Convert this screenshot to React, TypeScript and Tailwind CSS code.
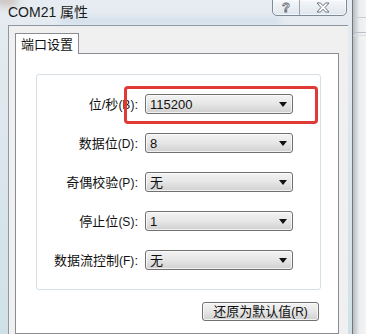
import { FC } from "react";

const font = "font-['Liberation_Sans','Noto_Sans_CJK_SC',sans-serif]";

type ComboProps = { value: string };

const Combo: FC<ComboProps> = ({ value }) => (
  <div className="flex h-[20px] w-[148px] items-center rounded-[3px] border border-[#707070] bg-gradient-to-b from-[#f3f3f3] via-[#e6e6e6] to-[#d0d0d0] pl-[4px] pr-[5px] shadow-[inset_0_0_0_1px_rgba(255,255,255,0.7)]">
    <span className="flex-1 text-[13px] leading-none text-[#111]">{value}</span>
    <svg width="8" height="5" viewBox="0 0 8 5" className="mb-[-1px]">
      <path d="M0 0h8L4 5z" fill="#111" />
    </svg>
  </div>
);

const rows = [
  { label: "位/秒", key: "(B)", value: "115200" },
  { label: "数据位", key: "(D)", value: "8" },
  { label: "奇偶校验", key: "(P)", value: "无" },
  { label: "停止位", key: "(S)", value: "1" },
  { label: "数据流控制", key: "(F)", value: "无" },
];

const App: FC = () => {
  return (
    <div className={`flex h-[334px] w-[366px] overflow-hidden bg-[#e4e9ee] ${font}`}>
      {/* dialog window */}
      <div className="flex w-[353px] flex-col bg-gradient-to-b from-[#e6ecf1] via-[#dbe5ec] to-[#cfe1e7] border-r border-[#6f7880]">
        {/* title bar */}
        <div className="relative flex h-[25px] shrink-0 items-start">
          <div className="absolute left-[-6px] top-[-6px] h-[12px] w-[24px] rounded-full bg-[#b39a8a] opacity-50 blur-[4px]" />
          <div className="absolute left-[60px] top-[19px] h-[4px] w-[220px] bg-[#aac4e2] opacity-50 blur-[3px]" />
          <span className="relative ml-[8px] mt-[4px] text-[14px] leading-[16px] text-[#1b1b1b]">COM21 属性</span>
          <div className="relative ml-auto mr-[5px] mt-[-1px] flex h-[17px] overflow-hidden rounded-b-[5px] border border-[#7d8996] bg-gradient-to-b from-[#f4f7fa] to-[#dfe6ee] shadow-[inset_0_0_0_1px_rgba(255,255,255,0.6)]">
            <div className="flex w-[27px] items-center justify-center border-r border-[#9aa5b1]">
              <span className="text-[13px] font-bold leading-none text-white [-webkit-text-stroke:0.8px_#5b636b]">?</span>
            </div>
            <div className="flex w-[46px] items-center justify-center">
              <svg width="14" height="11" viewBox="0 0 14 11">
                <path
                  d="M1 1h3.5L7 3.8 9.5 1H13L9 5.5 13 10H9.5L7 7.2 4.5 10H1l4-4.5z"
                  fill="#fff"
                  stroke="#5f6770"
                  strokeWidth="0.9"
                  strokeLinejoin="round"
                />
              </svg>
            </div>
          </div>
        </div>

        {/* body */}
        <div className="flex flex-1 pl-[8px] pr-[5px]">
          <div className="flex flex-1 flex-col border-l border-t border-[#8e979f] bg-[#f0f0f0] pl-[6px] pr-[9px] pt-[7px]">
            {/* tab strip */}
            <div className="flex">
              <div className="relative z-10 mb-[-1px] flex h-[21px] w-[64px] items-center justify-center border border-b-0 border-[#898c95] bg-white text-[13px] leading-none text-[#111]">
                端口设置
              </div>
            </div>
            {/* tab page */}
            <div className="flex flex-1 flex-col border border-[#898c95] bg-white pl-[20px] pr-[17px] pt-[20px]">
              <div className="relative flex h-[216px] w-[285px] flex-col gap-[19px] rounded-[3px] border border-[#d5dfe5] pt-[19px]">
                {rows.map((r) => (
                  <div key={r.label} className="flex items-center">
                    <div className="w-[101px] text-right text-[13px] leading-none text-[#111]">
                      {r.label}
                      <span className="text-[12px]">{r.key}</span>:
                    </div>
                    <div className="ml-[7px]">
                      <Combo value={r.value} />
                    </div>
                  </div>
                ))}
                <div className="absolute left-[87px] top-[11px] h-[38px] w-[194px] rounded-[4px] border-[3px] border-[#e03a36]" />
              </div>
              <div className="mr-[2px] mt-[12px] flex justify-end">
                <div className="flex h-[19px] w-[117px] items-center justify-center rounded-[3px] border border-[#707070] bg-gradient-to-b from-[#f3f3f3] via-[#e6e6e6] to-[#d0d0d0] text-[13px] leading-none text-[#111] shadow-[inset_0_0_0_1px_rgba(255,255,255,0.7)]">
                  还原为默认值<span className="text-[12px]">(R)</span>
                </div>
              </div>
            </div>
          </div>
        </div>
      </div>
      {/* window behind */}
      <div className="flex flex-1 flex-col bg-gradient-to-r from-[#b9bcc0] via-[#eceef0] to-[#f4f4f4]">
        <div className="mt-[17px] h-px bg-[#c9ced4]" />
        <div className="mt-[14px] h-px bg-[#b8bfc7]" />
        <div className="mt-[2px] h-px bg-[#d9dde2]" />
      </div>
    </div>
  );
};

export default App;
